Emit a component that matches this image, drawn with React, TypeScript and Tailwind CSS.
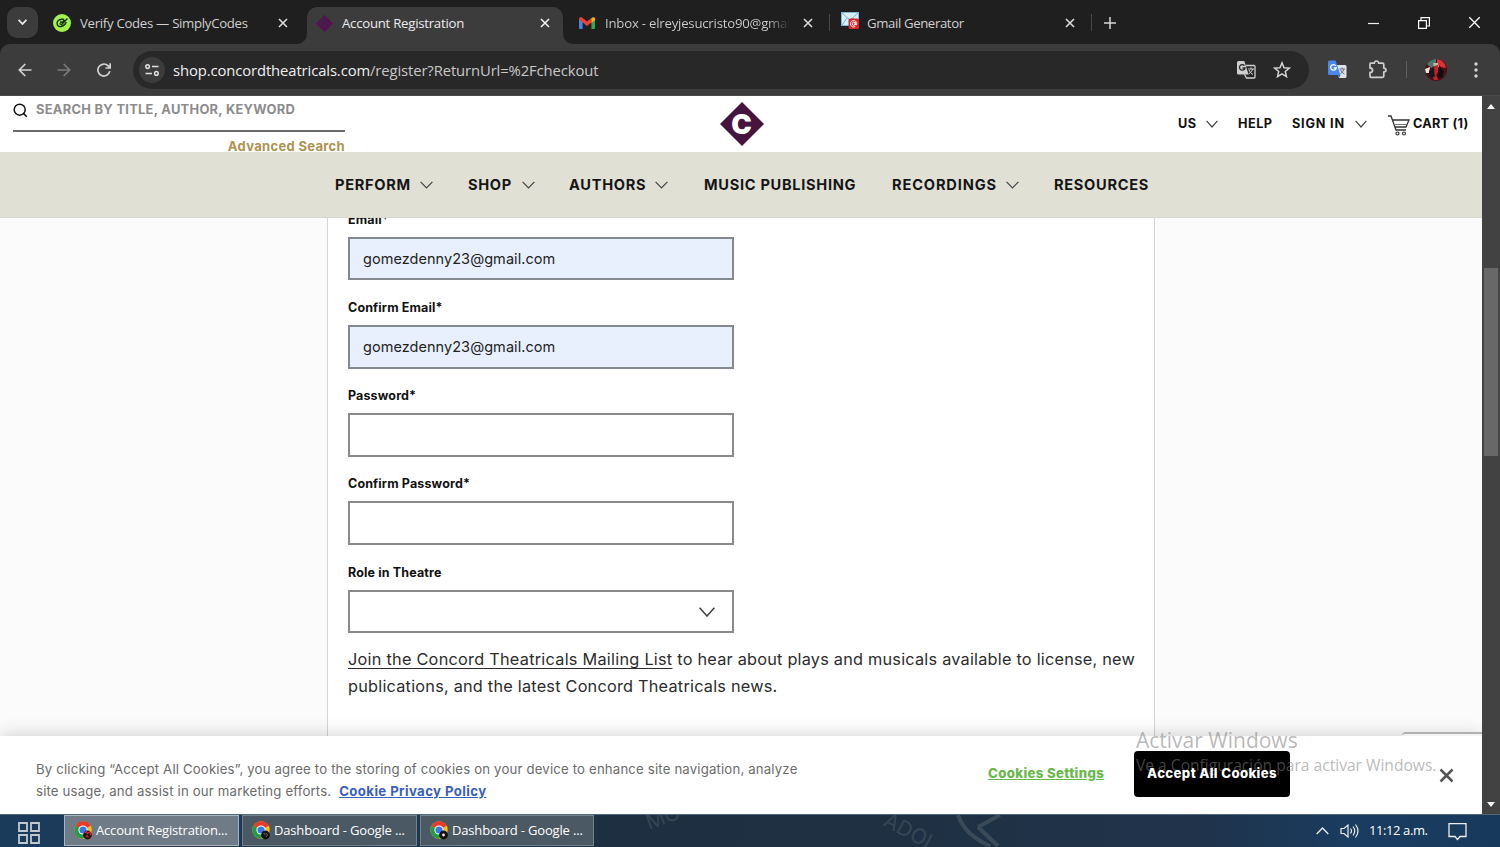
import React from "react";

const UI = "font-['Open_Sans',sans-serif]";

function Close({ size = 10, w = 1.6, color = "#dcdcdc" }: { size?: number; w?: number; color?: string }) {
  return (
    <svg width={size} height={size} viewBox="0 0 10 10" className="block shrink-0">
      <path d="M1 1L9 9M9 1L1 9" stroke={color} strokeWidth={w} fill="none" />
    </svg>
  );
}

function Chevron({ w = 13, h = 8, color = "#444", sw = 1.2 }: { w?: number; h?: number; color?: string; sw?: number }) {
  return (
    <svg width={w} height={h} viewBox={`0 0 ${w} ${h}`} className="block shrink-0">
      <path d={`M0.6 0.8L${w / 2} ${h - 1}L${w - 0.6} 0.8`} stroke={color} strokeWidth={sw} fill="none" />
    </svg>
  );
}

function Diamond({ size, fill, letter }: { size: number; fill: string; letter: string }) {
  return (
    <svg width={size} height={size} viewBox="0 0 44 44" className="block shrink-0">
      <path d="M22 0L44 22L22 44L0 22Z" fill={fill} />
      <text x="21.5" y="31.9" textAnchor="middle" fontFamily="Inter, sans-serif" fontWeight="900" fontSize="27" textLength="20.5" lengthAdjust="spacingAndGlyphs" fill={letter}>C</text>
    </svg>
  );
}

function Chrome({ badge }: { badge: "red" | "dark" | "disc" }) {
  return (
    <svg width="18" height="19" viewBox="0 0 18 19" className="block shrink-0">
      <circle cx="9" cy="9" r="8.7" fill="#fbc116" />
      <path d="M9 9L1.4 4.7A8.7 8.7 0 0 1 16.6 4.7Z" fill="#e33b2e" />
      <path d="M9 9L1.4 4.7A8.7 8.7 0 0 0 9 17.7L12 12Z" fill="#249a4c" />
      <circle cx="9" cy="9" r="4.6" fill="#fff" />
      <circle cx="9" cy="9" r="3.6" fill="#3b78e7" />
      <circle cx="13.5" cy="14" r="4.4" fill={badge === "red" ? "#2a1013" : "#111"} />
      {badge === "red" && <path d="M10.5 12l2-1.5 1 2 2-1.5 1.5 2-1 1M12 16l1-1.5 1.5 2" stroke="#cf2b34" strokeWidth="1.2" fill="none" />}
      {badge === "dark" && <path d="M11.5 12.3h1.5v2M14.5 12l1 2-1.5 2" stroke="#67605c" strokeWidth="1" fill="none" />}
      {badge === "disc" && <circle cx="13.5" cy="14" r="1.4" fill="#eee" />}
    </svg>
  );
}

function TabStrip() {
  return (
    <div className="flex h-11 items-stretch bg-[#1f1f1f] text-[13.2px] text-[#d0d0d0]">
      <div className="flex w-[53px] items-center pl-[7px]">
        <div className="flex h-[31px] w-[31px] items-center justify-center rounded-[10px] bg-[#3c3c3c]">
          <Chevron w={9} h={6} color="#e8e8e8" sw={1.8} />
        </div>
      </div>
      <div className="flex w-[254px] items-center pt-px">
        <svg width="18" height="18" viewBox="0 0 18 18" className="block shrink-0">
          <circle cx="9" cy="9" r="9" fill="#a3f04f" />
          <path d="M11 5.500C7.500 4.500 4 6.500 4 9.300C4 12 6.500 13 8.500 12.500C11 12 12.500 10 13.200 8M6.500 9.500L8.500 10.700L14.500 4.500M7 8L9 8.300L12 6" stroke="#16321b" strokeWidth="1.400" fill="none" />
        </svg>
        <span className="ml-[9px] w-[198px] whitespace-nowrap pt-0.5 tracking-[-0.29px]">Verify Codes — SimplyCodes</span>
        <Close />
      </div>
      <div className="relative mt-[7px] flex w-[256px] items-center rounded-t-[10px] bg-[#3c3c3c] pb-[5px] pl-[9px] text-[#ececec]">
        <svg width="10" height="10" className="absolute bottom-0 left-[-10px]"><path d="M10 0V10H0A10 10 0 0 0 10 0Z" fill="#3c3c3c" /></svg>
        <svg width="10" height="10" className="absolute bottom-0 right-[-10px]"><path d="M0 0V10H10A10 10 0 0 1 0 0Z" fill="#3c3c3c" /></svg>
        <Diamond size={17} fill="#54124f" letter="#3d2541" />
        <span className="ml-[9px] w-[198px] whitespace-nowrap pt-0.5 tracking-[-0.25px]">Account Registration</span>
        <Close color="#f2f2f2" />
      </div>
      <div className="flex w-[266px] items-center pl-4 pt-px">
        <svg width="16" height="12" viewBox="0 0 16 12" className="block shrink-0">
          <path d="M0 2V11Q0 12 1 12H3.600V4.800Z" fill="#4285f4" />
          <path d="M16 2V11Q16 12 15 12H12.400V4.800Z" fill="#34a853" />
          <path d="M0 2Q0 0 2 0L3.600 1L8 4.500L12.400 1V5.500L8 9L3.600 5.500L0 3Z" fill="#ea4335" />
          <path d="M12.400 1Q16-1 16 2V3L12.400 5.700Z" fill="#fbbc04" />
        </svg>
        <span className="ml-2.5 w-[198px] pt-0.5 tracking-[-0.22px]">
          <span className="block w-[184px] overflow-hidden whitespace-nowrap bg-gradient-to-r from-[#d0d0d0] from-88% to-[#2a2a2a] bg-clip-text text-transparent">Inbox - elreyjesucristo90@gmail.com</span>
        </span>
        <Close />
      </div>
      <div className="flex w-[262px] items-center pt-px">
        <div className="h-[17px] w-px bg-[#484848]" />
        <svg width="19" height="18" viewBox="0 0 19 18" className="-mt-1 ml-[11px] block shrink-0">
          <rect x="0.500" y="0.500" width="17" height="13" fill="#d9effb" stroke="#7fb9de" />
          <path d="M1 1L9 8L17 1M1 13L6 6M17 13L12 6" stroke="#79aed4" fill="none" />
          <rect x="7.500" y="6.500" width="10.500" height="10.500" rx="1.500" fill="#d9252b" />
          <circle cx="12.700" cy="11.800" r="1.500" stroke="#fff" fill="none" />
          <path d="M14.300 10v2.500q1.500 1 1.500-1a3.200 3.200 0 1 0-1.500 3" stroke="#fff" strokeWidth="0.900" fill="none" />
        </svg>
        <span className="ml-[7px] w-[198px] whitespace-nowrap pt-0.5 tracking-[-0.38px]">Gmail Generator</span>
        <Close />
      </div>
      <div className="flex flex-1 items-center pt-px">
        <div className="h-[17px] w-px bg-[#484848]" />
        <svg width="12" height="12" className="ml-[12px] block"><path d="M6 0V12M0 6H12" stroke="#d8d8d8" strokeWidth="1.500" /></svg>
        <svg width="11" height="12" className="ml-[252px] block"><path d="M0 6.500H11" stroke="#eee" strokeWidth="1.200" /></svg>
        <svg width="12" height="12" className="ml-[39px] block"><path d="M0.600 3.600H8.400V11.400H0.600ZM3 3.500V0.600H11.400V9H8.500" stroke="#fff" strokeWidth="1.200" fill="none" /></svg>
        <div className="ml-[38px]"><Close size={13} w={1} color="#fff" /></div>
      </div>
    </div>
  );
}

function Toolbar() {
  return (
    <div className="bg-[#1f1f1f]">
      <div className="flex h-[52px] items-center rounded-t-[10px] border-b border-[#4a4a4a] bg-[#3c3c3c] pl-[18px]">
        <svg width="14" height="14" viewBox="0 0 14 14" className="block"><path d="M13.500 7H1.500M7.300 1L1.300 7L7.300 13" stroke="#d2d2d2" strokeWidth="1.700" fill="none" /></svg>
        <svg width="14" height="14" viewBox="0 0 14 14" className="ml-[25px] block"><path d="M0.500 7H12.500M6.700 1L12.700 7L6.700 13" stroke="#7c7c7c" strokeWidth="1.600" fill="none" /></svg>
        <svg width="14" height="14" viewBox="0 0 14 14" className="ml-[26px] block"><path d="M12.800 8.200A6 6 0 1 1 11.200 2.800L13 4.600M13.200 0.300V5H8.500" stroke="#d2d2d2" strokeWidth="1.700" fill="none" /></svg>
        <div className="ml-[22px] flex h-[38px] w-[1176px] items-center rounded-full bg-[#282828] pl-[6px]">
          <div className="flex h-[26px] w-[26px] items-center justify-center rounded-full bg-[#3c3c3c]">
            <svg width="14" height="12" viewBox="0 0 14 12" className="block"><g stroke="#e0e0e0" strokeWidth="1.500" fill="none"><circle cx="2.600" cy="2.600" r="1.800" /><path d="M7 2.600H13.500M0.500 9.400H7" /><circle cx="11.400" cy="9.400" r="1.800" /></g></svg>
          </div>
          <span className="ml-2 w-[1064px] whitespace-nowrap pt-px text-[14.8px] tracking-[-0.1px] text-[#c8c8c8]"><span className="text-[#f0f0f0]">shop.concordtheatricals.com</span>/register?ReturnUrl=%2Fcheckout</span>
          <svg width="19" height="18" viewBox="0 0 19 18" className="block shrink-0">
            <path d="M9 4.500H17Q18 4.500 18 5.500V16Q18 17 17 17H9.500L7.500 13.500" stroke="#cfcfcf" strokeWidth="1.300" fill="none" />
            <path d="M1.500 0H7.300L11.500 13.500H1.500Q0 13.500 0 12V1.500Q0 0 1.500 0Z" fill="#cfcfcf" />
            <path d="M7.500 4.700A2.800 2.800 0 1 0 8 7H5.500" stroke="#282828" strokeWidth="1.300" fill="none" />
            <path d="M11 8H17M14 6.500V8M15.800 8Q15 11 11.500 13M12 9Q13 12 16 13.500" stroke="#cfcfcf" fill="none" />
          </svg>
          <svg width="18" height="18" viewBox="0 0 18 18" className="ml-[17px] block shrink-0"><path d="M9 1.800L11 6.700L16.300 7.100L12.300 10.500L13.500 15.700L9 12.900L4.500 15.700L5.700 10.500L1.700 7.100L7 6.700Z" stroke="#d4d4d4" strokeWidth="1.500" fill="none" /></svg>
        </div>
        <svg width="19" height="19" viewBox="0 0 19 19" className="ml-[19px] block">
          <path d="M7 5H17Q18.500 5 18.500 6.500V16.500Q18.500 18 17 18H11Z" fill="#dfe3e8" />
          <path d="M1.500 0.500H7.500L12.500 15H1.500Q0 15 0 13.500V2Q0 0.500 1.500 0.500Z" fill="#4b87ee" />
          <path d="M10 15H12.500L11 18Z" fill="#2f62c6" />
          <path d="M7.800 5.800A2.800 2.800 0 1 0 8.200 8H5.800" stroke="#fff" strokeWidth="1.300" fill="none" />
          <path d="M11.500 9H17M14 7.500V9M16 9Q15 12 12.500 14M12.500 10Q14 13 16.500 14" stroke="#65727e" fill="none" />
        </svg>
        <svg width="19" height="19" viewBox="0 0 19 19" className="ml-[21px] block"><path d="M2.500 3.200H6.300Q6.600 1 8.500 1Q10.400 1 10.700 3.200H14.500Q15.800 3.200 15.800 4.500V8Q18 8.300 18 10Q18 11.800 15.800 12V16Q15.800 17.300 14.500 17.300H3Q2 17.300 2 16V12.600Q4.600 12.300 4.600 10.200Q4.600 8.200 2 7.900V4.300Q2 3.200 2.500 3.200Z" stroke="#cfcfcf" strokeWidth="1.700" fill="none" /></svg>
        <div className="ml-[19px] h-[17px] w-px bg-[#606060]" />
        <svg width="22" height="22" viewBox="0 0 22 22" className="ml-[18px] block">
          <circle cx="11" cy="11" r="11" fill="#4c1117" />
          <path d="M2 5Q6 0 11 0V6L6 9Z" fill="#477a72" /><path d="M12 0Q20 2 21 9L16 8L12 4Z" fill="#e53035" />
          <path d="M0 10L5 8L4 14L1 14Z" fill="#ece1dc" /><path d="M8 4L13 4L14 8L9 8Z" fill="#d8a9ab" /><path d="M9 7L13 6L13 13L10 18Z" fill="#c5202b" />
          <path d="M14 8L19 12L17 19L12 19Z" fill="#0f0e12" /><path d="M4 12L9 9L9 19L4 18Z" fill="#17161b" /><path d="M8 18L12 17L13 21L9 21Z" fill="#c5202b" />
        </svg>
        <svg width="4" height="16" className="ml-[27px] block"><g fill="#d4d4d4"><circle cx="2" cy="2" r="1.700" /><circle cx="2" cy="8" r="1.700" /><circle cx="2" cy="14" r="1.700" /></g></svg>
      </div>
    </div>
  );
}

function SiteHeader() {
  return (
    <header className="flex h-14 items-start bg-white pl-[13px]">
      <div className="w-[332px]">
        <div className="flex h-9 items-start border-b-2 border-[#6d696d] pt-[5px]">
          <svg width="15" height="15" viewBox="0 0 15 15" className="mt-[2px] block"><circle cx="6.700" cy="6.700" r="5.500" stroke="#111" strokeWidth="1.500" fill="none" /><path d="M10.600 10.600L13.800 13.800" stroke="#111" strokeWidth="1.500" /></svg>
          <span className="ml-2 whitespace-nowrap text-[12.9px] font-bold leading-[17px] tracking-[0.28px] text-[#8c8c8c]">SEARCH BY TITLE, AUTHOR, KEYWORD</span>
        </div>
        <div className="pt-[6px] text-right text-[13px] font-bold leading-[17px] tracking-[0.32px] text-[#ac9350]">Advanced Search</div>
      </div>
      <div className="ml-[375px] mt-[6px]"><Diamond size={44} fill="#47133f" letter="#fff" /></div>
      <div className="ml-[414px] flex h-14 items-center whitespace-nowrap text-[12.7px] font-bold tracking-[0.5px] text-[#111]">
        <span className="w-[28px]">US</span>
        <Chevron w={12} h={8} />
        <span className="ml-[20px] w-[54px]">HELP</span>
        <span className="w-[63px] tracking-[0.8px]">SIGN IN</span>
        <Chevron w={12} h={8} />
        <svg width="22" height="21" viewBox="0 0 22 21" className="ml-[21px] mt-[2px] block"><path d="M0 1H3L8 15H18M4.500 5H21L18 12H7" stroke="#333" strokeWidth="1.300" fill="none" /><path d="M6.500 9.500H19" stroke="#777" strokeWidth="1" /><circle cx="9.500" cy="18.500" r="1.500" stroke="#333" fill="none" strokeWidth="1.200" /><circle cx="16" cy="18.500" r="1.500" stroke="#333" fill="none" strokeWidth="1.200" /></svg>
        <span className="ml-[3px] tracking-[0.25px]">CART (1)</span>
      </div>
    </header>
  );
}

function MainNav() {
  return (
    <nav className="flex h-[66px] items-center whitespace-nowrap border-b border-[#d8d8d3] bg-[#e0e0d5] pl-[335px] text-[14.6px] font-bold tracking-[0.7px] text-[#151515] [&>span]:pt-0.5">
      <span className="w-[85px]">PERFORM</span><Chevron />
      <span className="ml-[35px] w-[54px]">SHOP</span><Chevron />
      <span className="ml-[34px] w-[86px]">AUTHORS</span><Chevron />
      <span className="ml-[36px] w-[188px]">MUSIC PUBLISHING</span>
      <span className="w-[114px] tracking-[0.85px]">RECORDINGS</span><Chevron />
      <span className="ml-[35px]">RESOURCES</span>
    </nav>
  );
}

function Field({ label, value, select }: { label: string; value?: string; select?: boolean }) {
  return (
    <div className="h-[88.25px]">
      <label className="block h-[27px] pt-px text-[12.5px] font-bold leading-[18px] tracking-[0.14px] text-[#111]">{label}</label>
      <div className={value ? "flex h-[43.6px] items-center border-2 border-[#858a90] bg-[#e8f0fe] pl-[13px] text-[14.5px] tracking-[0.05px] text-[#222]" : "flex h-[43.6px] items-center border-2 border-[#8a8a8a] bg-white text-[14.5px]"}>
        {value}
        {select && <div className="ml-auto mr-[17.5px]"><Chevron w={16} h={10} sw={1.6} /></div>}
      </div>
    </div>
  );
}

function Form() {
  return (
    <main className="flex h-[518px] justify-center overflow-hidden bg-[#fbfbfb]">
      <div className="w-[828px] border-x border-[#d5d5d5] bg-white pl-5">
        <div className="mt-[-8.3px] w-[386px]">
          <Field label="Email*" value="gomezdenny23@gmail.com" />
          <Field label="Confirm Email*" value="gomezdenny23@gmail.com" />
          <Field label="Password*" />
          <Field label="Confirm Password*" />
          <Field label="Role in Theatre" select />
        </div>
        <p className="mt-[-4.7px] whitespace-nowrap text-[16.3px] leading-[26.5px] tracking-[0.22px] text-[#2c2c2c]">
          <span className="tracking-[0.25px] underline underline-offset-[3px]">Join the Concord Theatricals Mailing List</span> to hear about plays and musicals available to license, new<br />
          publications, and the latest Concord Theatricals news.
        </p>
      </div>
    </main>
  );
}

function CookieBanner() {
  return (
    <section className="relative flex h-[78px] items-start bg-white pl-9 shadow-[0_0_18px_rgba(0,0,0,0.2)]">
      <div className="absolute right-0 top-[-4px] h-1 w-[80px] rounded-tl-md border-t-2 border-[#b0b0b0] bg-[#f4f4f4]" />
      <p className="w-[952px] whitespace-nowrap pt-[22px] text-[13.2px] leading-[22px] tracking-[0.17px] text-[#6b6b6b]">
        By clicking “Accept All Cookies”, you agree to the storing of cookies on your device to enhance site navigation, analyze<br />
        site usage, and assist in our marketing efforts. <a className="ml-[4px] font-bold tracking-[0.4px] text-[#3860be] underline">Cookie Privacy Policy</a>
      </p>
      <a className="w-[146px] whitespace-nowrap pt-[27px] text-[13.2px] font-extrabold leading-[20px] tracking-[0.36px] text-[#68b84c] underline">Cookies Settings</a>
      <div className={`pointer-events-none absolute left-[1136px] top-[-11px] z-10 whitespace-nowrap text-[rgba(125,125,125,0.55)] ${UI}`}>
        <div className="text-[21px] leading-[30px]">Activar Windows</div>
        <div className="text-[15.6px] leading-[20px]">Ve a Configuración para activar Windows.</div>
      </div>
      <div className="mt-[15px] flex h-[46px] w-[156px] items-center justify-center whitespace-nowrap rounded-sm bg-black text-[13.2px] font-extrabold tracking-[0.36px] text-white"><span className="relative z-20">Accept All Cookies</span></div>
      <div className="ml-[149px] mt-[32px]"><Close size={15} w={1.7} color="#555" /></div>
    </section>
  );
}

function Scrollbar() {
  return (
    <div className="flex w-[18px] flex-col items-center bg-[#424242] pb-[7px] pt-2">
      <svg width="8" height="5" className="block"><path d="M0 5L4 0L8 5Z" fill="#f5f5f5" /></svg>
      <div className="mt-[159px] h-[188px] w-[14px] bg-[#686868]" />
      <svg width="8" height="5" className="mt-auto block"><path d="M0 0L4 5L8 0Z" fill="#f5f5f5" /></svg>
    </div>
  );
}

function Taskbar() {
  return (
    <footer className="relative flex h-[33px] overflow-hidden border-t border-[#52697a] bg-[linear-gradient(90deg,#1b3b5b_0%,#1d3850_30%,#1d2f40_42%,#1e3042_60%,#20334b_80%,#193c60_90%,#173a5c_100%)] text-[13px] text-white">
      <svg width="460" height="32" className="absolute left-[600px] top-0">
        <g fill="#354656" fontFamily="Inter, sans-serif" fontSize="21">
          <text x="49" y="15" transform="rotate(-20 49 15)">MO</text>
          <text x="282" y="10" transform="rotate(28 282 10)">ADOL</text>
        </g>
        <path d="M358 0Q365 20 390 31M378 12L400 0M378 12L398 31" stroke="#3a4a59" strokeWidth="4" fill="none" />
      </svg>
      <div className="relative flex w-[65px] items-center pl-[18px] pt-1">
        <svg width="22" height="22" className="block"><path d="M1 1H9V9H1ZM13 1H21V9H13ZM1 13H9V21H1ZM13 13H21V21H13Z" stroke="#c0c9d0" strokeWidth="1.800" fill="none" /></svg>
      </div>
      <div className="relative -ml-px flex gap-[3px] pb-px">
        <div className="flex w-[175px] items-center gap-1 whitespace-nowrap border border-[#aab4bb] bg-[#6f7b86] pl-[9px] tracking-[-0.17px]"><Chrome badge="red" />Account Registration...</div>
        <div className="flex w-[175px] items-center gap-1 whitespace-nowrap border border-[#74818b] bg-[#4b5965] pl-[9px] tracking-[-0.17px]"><Chrome badge="dark" />Dashboard - Google ...</div>
        <div className="flex w-[174px] items-center gap-1 whitespace-nowrap border border-[#74818b] bg-[#4b5965] pl-[9px] tracking-[-0.17px]"><Chrome badge="disc" />Dashboard - Google ...</div>
      </div>
      <div className="relative ml-auto flex items-center pr-[33px]">
        <svg width="13" height="8" className="block"><path d="M0.700 7L6.500 1L12.300 7" stroke="#eee" strokeWidth="1.300" fill="none" /></svg>
        <svg width="20" height="16" viewBox="0 0 20 16" className="ml-[11px] block"><path d="M1 5.500H4L8 2V14L4 10.500H1ZM10.500 5.500Q12.500 8 10.500 10.500M13 3.500Q16.500 8 13 12.500M15.500 1.500Q20.500 8 15.500 14.500" stroke="#eee" strokeWidth="1.200" fill="none" /></svg>
        <span className="ml-[9px] w-[79px] whitespace-nowrap tracking-[-0.4px]">11:12 a.m.</span>
        <svg width="19" height="19" viewBox="0 0 19 19" className="block"><path d="M1 1.700H18V14.500H12L9.500 17.500L7 14.500H1Z" stroke="#eee" strokeWidth="1.300" fill="none" /></svg>
      </div>
    </footer>
  );
}

export default function App() {
  return (
    <div className={`h-[847px] w-[1500px] overflow-hidden bg-[#1f1f1f] ${UI}`}>
      <TabStrip />
      <Toolbar />
      <div className="flex h-[718px]">
        <div className="w-[1482px] overflow-hidden font-[Inter,sans-serif]">
          <SiteHeader />
          <MainNav />
          <Form />
          <CookieBanner />
        </div>
        <Scrollbar />
      </div>
      <Taskbar />
    </div>
  );
}
